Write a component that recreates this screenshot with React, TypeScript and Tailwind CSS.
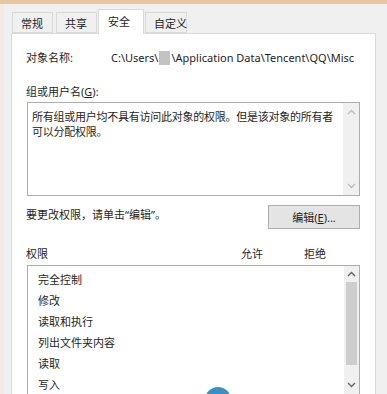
import React from 'react';

const tabs = ['常规', '共享', '安全', '自定义'];
const perms = ['完全控制', '修改', '读取和执行', '列出文件夹内容', '读取', '写入'];

function Chevron({ up, color = '#606060' }: { up?: boolean; color?: string }) {
  return (
    <svg width="9" height="6" viewBox="0 0 9 6" fill="none">
      <path
        d={up ? 'M1 5L4.5 1.5L8 5' : 'M1 1L4.5 4.5L8 1'}
        stroke={color}
        strokeWidth="1.3"
      />
    </svg>
  );
}

export default function App() {
  return (
    <div className="relative w-[387px] h-[394px] overflow-hidden bg-[#f0f0f0] text-[11px] leading-[15px] text-[#1e1e1e] font-['Noto_Sans','Noto_Sans_CJK_SC',sans-serif]">
      <div className="h-[4px] bg-[#e8c6a0]" />
      <div className="flex h-[390px]">
        <div className="w-[4px] bg-[#f5e9e3]" />
        <div className="pl-[7px] flex-1">
          {/* tabs */}
          <div className="flex items-end h-[29px] pl-[1px]">
            {tabs.map((t, i) =>
              i === 2 ? (
                <div
                  key={t}
                  className="relative z-10 -mb-[1px] h-[25px] w-[46px] pl-[9px] pt-[4px] bg-white border border-b-0 border-[#d9d9d9]"
                >
                  {t}
                </div>
              ) : (
                <div
                  key={t}
                  className={`h-[21px] pl-[8px] pt-[3px] bg-[#f0f0f0] border border-[#d9d9d9] whitespace-nowrap ${i === 3 ? 'w-[42px] ml-[1px]' : 'w-[41px]'} ${i === 1 ? 'ml-[3px] mr-[1px]' : ''}`}
                >
                  {t}
                </div>
              )
            )}
          </div>

          {/* panel */}
          <div className="w-[365px] h-[370px] bg-white border border-[#d9d9d9] pl-[14px] pr-[15px] pt-[16px]">
            <div className="flex">
              <div className="w-[85px]">对象名称:</div>
              <div className="flex items-center whitespace-nowrap">
                <span>C:\Users\</span>
                <span className="inline-block w-[11px] h-[14px] bg-[#c3c3c3] mx-[1px]" />
                <span>\Application Data\Tencent\QQ\Misc</span>
              </div>
            </div>

            <div className="mt-[19px]">
              组或用户名(<span className="underline">G</span>):
            </div>
            <div className="mt-[3px] ml-[1px] h-[94px] border border-[#adadad] flex">
              <div className="flex-1 pl-[4px] pt-[6px] tracking-[-0.25px]">
                所有组或用户均不具有访问此对象的权限。但是该对象的所有者可以分配权限。
              </div>
              <div className="w-[16px] bg-[#f0f0f0] flex flex-col items-center justify-between py-[6px]">
                <Chevron up color="#bcbcbc" />
                <Chevron color="#bcbcbc" />
              </div>
            </div>

            <div className="mt-[9px] flex items-start justify-between">
              <div className="mt-[2px]">要更改权限，请单击“编辑”。</div>
              <div className="w-[92px] h-[24px] border border-[#adadad] bg-[#e4e4e4] flex items-center justify-center">
                编辑(<span className="underline">E</span>)...
              </div>
            </div>

            <div className="mt-[17px] flex">
              <div className="w-[215px]">权限</div>
              <div className="w-[63px]">允许</div>
              <div>拒绝</div>
            </div>
            <div className="mt-[4px] ml-[1px] h-[140px] border border-[#adadad] flex">
              <div className="flex-1 pl-[10px] pt-[3px]">
                {perms.map((p) => (
                  <div key={p} className="h-[21px] flex items-center">
                    {p}
                  </div>
                ))}
              </div>
              <div className="w-[15px] bg-[#f0f0f0] flex flex-col items-center pt-[5px]">
                <Chevron up />
                <div className="mt-[5px] w-[11px] h-[83px] bg-[#cdcdcd]" />
                <div className="mt-[17px]">
                  <Chevron />
                </div>
              </div>
            </div>
          </div>
        </div>
      </div>
      <div className="absolute left-[205px] top-[387px] w-[26px] h-[26px] rounded-full bg-[#3b8fc2]" />
    </div>
  );
}
